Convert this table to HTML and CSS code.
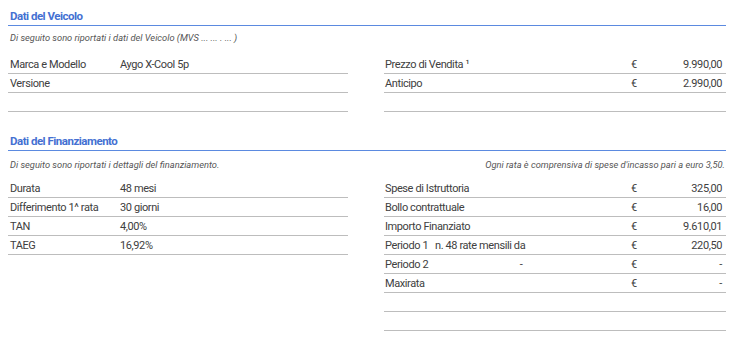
FILE: index.html
```html
<!DOCTYPE html>
<html lang="it">
<head>
<meta charset="utf-8">
<title>Dati del Veicolo</title>
<link rel="stylesheet" href="styles.css">
</head>
<body>
<div class="page">
  <section class="sec">
    <h2 class="sec-title">Dati del Veicolo</h2>
    <div class="sec-sub"><span>Di seguito sono riportati i dati del Veicolo (MVS ... ... . ... )</span></div>
    <div class="cols">
      <div class="tbl">
        <div class="row lrow"><span class="lbl">Marca e Modello</span><span class="val">Aygo X-Cool 5p</span></div>
        <div class="row lrow"><span class="lbl">Versione</span><span class="val"></span></div>
        <div class="row lrow"><span class="lbl">&nbsp;</span><span class="val"></span></div>
      </div>
      <div class="tbl">
        <div class="row rrow"><span class="lbl">Prezzo di Vendita ¹</span><span class="eur">€</span><span class="amt">9.990,00</span></div>
        <div class="row rrow"><span class="lbl">Anticipo</span><span class="eur">€</span><span class="amt">2.990,00</span></div>
        <div class="row rrow"><span class="lbl">&nbsp;</span><span class="eur"></span><span class="amt"></span></div>
      </div>
    </div>
  </section>

  <section class="sec sec-fin">
    <h2 class="sec-title">Dati del Finanziamento</h2>
    <div class="sec-sub sub-fin"><span>Di seguito sono riportati i dettagli del finanziamento.</span><span>Ogni rata è comprensiva di spese d'incasso pari a euro 3,50.</span></div>
    <div class="cols cols-fin">
      <div class="tbl">
        <div class="row lrow"><span class="lbl">Durata</span><span class="val">48 mesi</span></div>
        <div class="row lrow"><span class="lbl">Differimento 1^ rata</span><span class="val">30 giorni</span></div>
        <div class="row lrow"><span class="lbl">TAN</span><span class="val">4,00%</span></div>
        <div class="row lrow"><span class="lbl">TAEG</span><span class="val">16,92%</span></div>
      </div>
      <div class="tbl">
        <div class="row rrow"><span class="lbl">Spese di Istruttoria</span><span class="eur">€</span><span class="amt">325,00</span></div>
        <div class="row rrow"><span class="lbl">Bollo contrattuale</span><span class="eur">€</span><span class="amt">16,00</span></div>
        <div class="row rrow"><span class="lbl">Importo Finanziato</span><span class="eur">€</span><span class="amt">9.610,01</span></div>
        <div class="row rrow"><span class="lbl per"><span>Periodo 1</span><span class="per-info">n. 48 rate mensili da</span></span><span class="eur">€</span><span class="amt">220,50</span></div>
        <div class="row rrow"><span class="lbl per"><span>Periodo 2</span><span class="per-info per-dash">-</span></span><span class="eur">€</span><span class="amt">-</span></div>
        <div class="row rrow"><span class="lbl">Maxirata</span><span class="eur">€</span><span class="amt">-</span></div>
        <div class="row rrow"><span class="lbl">&nbsp;</span><span class="eur"></span><span class="amt"></span></div>
        <div class="row rrow"><span class="lbl">&nbsp;</span><span class="eur"></span><span class="amt"></span></div>
      </div>
    </div>
  </section>
</div>
</body>
</html>
```

FILE: styles.css
```css
html, body {
  margin: 0;
  padding: 0;
  background: #ffffff;
}

body {
  font-family: Roboto, "Liberation Sans", sans-serif;
  color: #404040;
}

.page {
  width: 718px;
  padding-left: 8px;
}

.sec-title {
  margin: 0;
  padding: 9px 0 2px 2px;
  line-height: 14px;
  font-size: 11.5px;
  font-weight: 700;
  letter-spacing: -0.5px;
  color: #4470d2;
  border-bottom: 1px solid #5b8ae0;
}

.sec-sub {
  display: flex;
  justify-content: space-between;
  margin-top: 6px;
  padding: 0 1px 0 2px;
  line-height: 12px;
  font-size: 9.3px;
  font-style: italic;
  letter-spacing: 0;
  color: #555555;
}

.sub-fin {
  margin-top: 8px;
}

.cols {
  display: grid;
  grid-template-columns: 340px 342px;
  column-gap: 36px;
  margin-top: 11px;
}

.cols-fin {
  margin-top: 8px;
}

.sec-fin {
  margin-top: 13px;
}

.row {
  display: grid;
  padding-top: 2px;
  line-height: 16px;
  font-size: 11px;
  letter-spacing: -0.4px;
  border-bottom: 1px solid #bdbdbd;
  white-space: nowrap;
}

.lrow {
  grid-template-columns: 112px 1fr;
}

.lrow .lbl {
  padding-left: 2px;
}

.rrow {
  grid-template-columns: 1fr 12px 83px;
}

.rrow .lbl {
  padding-left: 1px;
}

.amt {
  text-align: right;
  padding-right: 4px;
}

.per {
  display: grid;
  grid-template-columns: 50px 1fr;
}

.per-dash {
  text-align: center;
  padding-right: 24px;
}
```
